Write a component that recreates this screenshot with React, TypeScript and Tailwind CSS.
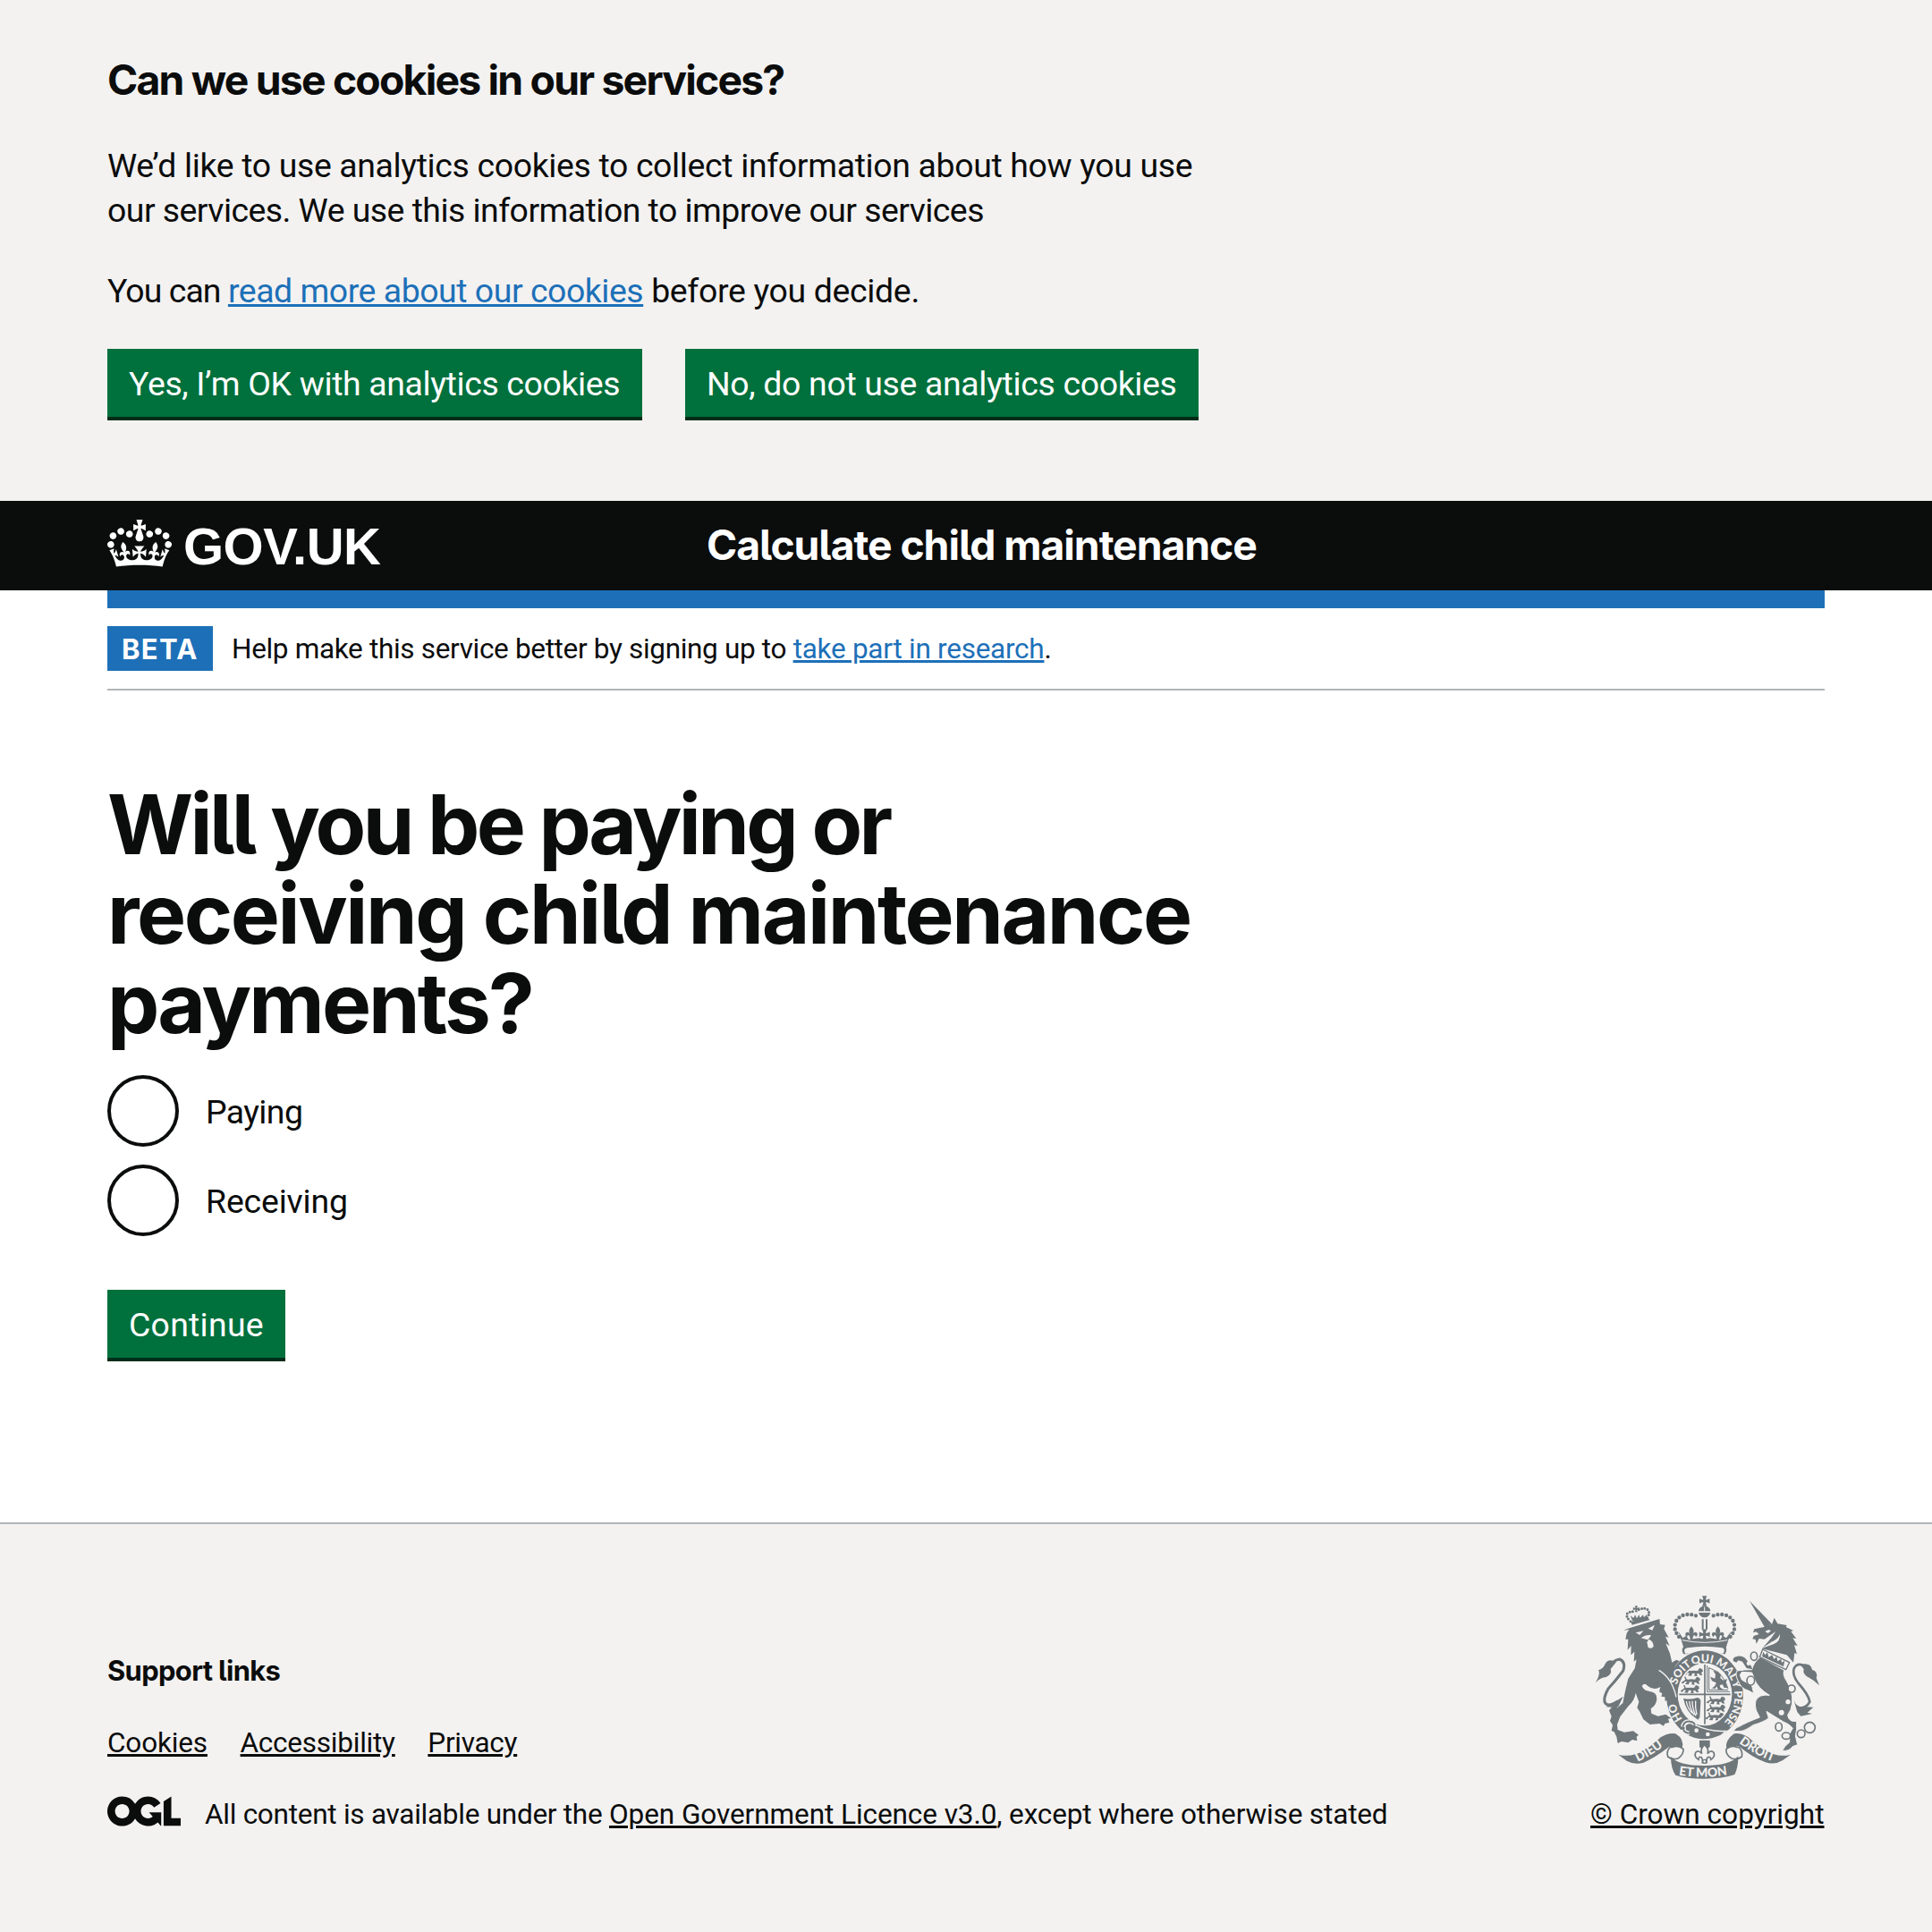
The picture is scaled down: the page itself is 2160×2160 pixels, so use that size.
import type { ReactNode } from 'react';

const bold = "font-['Inter','Liberation_Sans',sans-serif] font-bold [font-feature-settings:'cv05','ss03']";
const inkLink = 'underline decoration-[3px] underline-offset-[2px]';
const blueLink = 'text-[#1d70b8] underline decoration-[3px] underline-offset-[2px]';

function Button({ children, className }: { children: ReactNode; className: string }) {
  return (
    <button
      type="button"
      className={`h-20 shrink-0 whitespace-nowrap border-b-4 border-[#002d18] bg-[#00703c] px-6 pt-5 pb-[18px] text-left text-[37.4px] leading-[38px] text-white ${className}`}
    >
      {children}
    </button>
  );
}

function Radio({ label, className }: { label: string; className: string }) {
  return (
    <label className="flex gap-[30px]">
      <span className="size-20 rounded-full border-4 border-[#0b0c0c]" />
      <span className={`mt-4 text-[37.4px] leading-[50px] ${className}`}>{label}</span>
    </label>
  );
}

function Crown() {
  return (
    <svg viewBox="0 0 132 97" className="mt-[21px] h-[53px] w-[72px] fill-current">
      <path d="M25 30.2c3.5 1.5 7.7-.2 9.1-3.7 1.5-3.6-.2-7.8-3.9-9.2-3.6-1.4-7.6.3-9.1 3.9-1.4 3.5.3 7.5 3.9 9zM9 39.5c3.6 1.5 7.8-.2 9.2-3.7 1.5-3.6-.2-7.8-3.9-9.1-3.6-1.5-7.6.2-9.1 3.8-1.4 3.5.3 7.5 3.8 9zM4.4 57.2c3.5 1.5 7.7-.2 9.1-3.8 1.5-3.6-.2-7.7-3.9-9.1-3.5-1.5-7.6.3-9.1 3.8-1.4 3.5.3 7.6 3.9 9.1zm38.3-21.4c3.5 1.5 7.7-.2 9.1-3.8 1.5-3.6-.2-7.7-3.9-9.1-3.6-1.5-7.6.3-9.1 3.8-1.3 3.6.4 7.7 3.9 9.1zm64.4-5.6c-3.6 1.5-7.8-.2-9.1-3.7-1.5-3.6.2-7.8 3.8-9.2 3.6-1.4 7.7.3 9.2 3.9 1.3 3.5-.4 7.5-3.9 9zm15.9 9.3c-3.6 1.5-7.7-.2-9.1-3.7-1.5-3.6.2-7.8 3.7-9.1 3.6-1.5 7.7.2 9.2 3.8 1.5 3.5-.3 7.5-3.8 9zm4.7 17.7c-3.6 1.5-7.8-.2-9.2-3.8-1.5-3.6.2-7.7 3.9-9.1 3.6-1.5 7.7.3 9.2 3.8 1.3 3.5-.4 7.6-3.9 9.1zM89.3 35.8c-3.6 1.5-7.8-.2-9.2-3.8-1.4-3.6.2-7.7 3.9-9.1 3.6-1.5 7.7.3 9.2 3.8 1.4 3.6-.3 7.7-3.9 9.1zM69.7 17.7l8.9 4.7V9.3l-8.9 2.8c-.2-.3-.5-.6-.9-.9L72.4 0H59.6l3.5 11.2c-.3.3-.6.5-.9.9l-8.8-2.8v13.1l8.8-4.7c.3.3.6.7.9.9l-5 15.4v.1c-.2.8-.4 1.6-.4 2.4 0 4.1 3.1 7.5 7 8.1h.2c.3 0 .7.1 1 .1.4 0 .7 0 1-.1h.2c4-.6 7.1-4.1 7.1-8.1 0-.8-.1-1.7-.4-2.4V34l-5.1-15.4c.4-.2.7-.6 1-.9zM66 92.8c16.9 0 32.8 1.1 47.1 3.2 4-16.9 8.9-26.7 14-33.5l-9.6-3.4c1 4.9 1.1 7.2 0 10.2-1.5-1.4-3-4.3-4.2-8.7L108.6 76c2.8-2 5-3.2 7.5-3.3-4.4 9.4-10 11.9-13.6 11.2-4.3-.8-6.3-4.6-5.6-7.9 1-4.7 5.7-5.9 8-.5 4.3-8.7-3-11.4-7.6-8.8 7.1-7.2 7.9-13.5 2.1-21.1-8 6.1-8.1 12.3-4.5 20.8-4.7-5.4-12.1-2.5-9.5 6.2 3.4-5.2 7.9-2 7.2 3.1-.6 4.3-6.4 7.8-13.5 7.2-10.3-.9-10.9-8-11.2-13.8 2.5-.5 7.1 1.8 11 7.3L80.2 60c-4.1 4.4-8 5.3-12.3 5.4 1.4-4.4 8-11.6 8-11.6H55.5s6.4 7.2 7.9 11.6c-4.2-.1-8-1-12.3-5.4l1.4 16.4c3.9-5.5 8.5-7.7 10.9-7.3-.3 5.8-.9 12.8-11.1 13.8-7.2.6-12.9-2.9-13.5-7.2-.7-5 3.8-8.3 7.1-3.1 2.7-8.7-4.6-11.6-9.4-6.2 3.7-8.5 3.6-14.7-4.6-20.8-5.8 7.6-5 13.9 2.2 21.1-4.7-2.6-11.9.1-7.7 8.8 2.3-5.5 7.1-4.2 8.1.5.7 3.3-1.3 7.1-5.7 7.9-3.5.7-9-1.8-13.5-11.2 2.5.1 4.7 1.3 7.5 3.3l-4.7-15.4c-1.2 4.4-2.7 7.2-4.3 8.7-1.1-3-.9-5.3 0-10.2l-9.5 3.4c5 6.9 9.9 16.7 14 33.5 14.8-2.1 30.8-3.2 47.7-3.2z" />
    </svg>
  );
}

function OglLogo() {
  return (
    <svg viewBox="0 0 483.2 195.7" className="mt-[5px] h-[34px] w-[82px] fill-current">
      <path d="M421.5 142.8V.1l-50.7 32.3v161.1h112.4v-50.7zm-122.3-9.6A47.12 47.12 0 0 1 221 97.8c0-26 21.1-47.1 47.1-47.1 16.7 0 31.4 8.7 39.7 21.8l42.7-27.2A97.63 97.63 0 0 0 268.1 0c-36.5 0-68.3 20.1-85.1 49.7A98 98 0 0 0 97.8 0C43.9 0 0 43.9 0 97.8s43.9 97.8 97.8 97.8c36.5 0 68.3-20.1 85.1-49.7a97.76 97.76 0 0 0 149.6 25.4l19.4 22.2h3v-87.8h-80l24.3 27.5zM97.8 145c-26 0-47.1-21.1-47.1-47.1s21.1-47.1 47.1-47.1 47.1 21.1 47.1 47.1S123.8 145 97.8 145" />
    </svg>
  );
}

const INK = '#6f777b';
const PAPER = '#f3f2f1';

function CrossPattee({ x, y, s }: { x: number; y: number; s: number }) {
  return (
    <path
      transform={`translate(${x} ${y}) scale(${s})`}
      d="M-8-17H8Q4-10 4-4Q10-4 17-8V8Q10 4 4 4Q4 10 8 17H-8Q-4 10-4 4Q-10 4-17 8V-8Q-10-4-4-4Q-4-10-8-17z"
      fill={INK}
    />
  );
}

function Fleur({ x, y, s }: { x: number; y: number; s: number }) {
  return (
    <path
      transform={`translate(${x} ${y}) scale(${s})`}
      d="M0-24Q13-9 4 2Q10-8 18-3Q24 5 15 12Q14 4 8 6Q5 9 4 20H-4Q-5 9-8 6Q-14 4-15 12Q-24 5-18-3Q-10-8-4 2Q-13-9 0-24z"
      fill={INK}
    />
  );
}

/* A walking lion, used three to a quarter */
function Passant({ x, y }: { x: number; y: number }) {
  return (
    <path
      transform={`translate(${x} ${y})`}
      d="M0 2l8-7-4-8 4-2 4 9 4 1 12-1 12 1 6-9 9 3 3 8-6 4 4 9-9-1-3-5-7 1 2 8-11-1 3-8-9-1-3 9-12-1 6-8-7-1-5 7-7-2 6-7z"
      fill={INK}
    />
  );
}

function Crest() {
  return (
    <svg viewBox="72 40 750 618" className="mx-auto h-[206px] w-[250px]" fill="none">
      <defs>
        <path id="garter" d="M385 474A100 114 0 1 1 491 474" />
        <path id="dieu" d="M213 597Q268 572 322 528" />
        <path id="mon" d="M350 641Q437 656 524 639" />
        <path id="droit" d="M552 534Q604 574 672 598" />
        <clipPath id="shield">
          <ellipse cx="438" cy="371" rx="86" ry="100" />
        </clipPath>
      </defs>

      {/* royal crown */}
      <CrossPattee x={437} y={58} s={1} />
      <path d="M430 76h14q12 4 13 16h-40q1-12 13-16z" fill={INK} />
      <path d="M437 78v14" stroke={PAPER} strokeWidth="3" />
      <path d="M417 97h40q-4 12-12 15-8 2-16 0-8-3-12-15z" fill={INK} />
      <path d="M431 119v34M444 119v34" stroke={INK} strokeWidth="6" />
      <path
        d="M408 107Q386 99 364 106Q338 117 337 147Q340 168 357 184M467 107Q489 99 511 106Q537 117 538 147Q535 168 518 184"
        stroke={INK}
        strokeWidth="13"
        strokeLinecap="round"
        strokeDasharray="0 14.6"
      />
      <CrossPattee x={437} y={170} s={1.05} />
      <Fleur x={393} y={167} s={1} />
      <Fleur x={482} y={167} s={1} />
      <path d="M350 160l14 22 12-8 8 14 20-4 16-2 17 6 17-6 16 2 20 4 8-14 12 8 16-22-17 55q-77-21-142 0z" fill={INK} />
      <path d="M362 189Q437 205 514 189" stroke={PAPER} strokeWidth="3" />
      <path d="M366 236q-12-24 10-28 60-12 124 0 18 4 6 28z" fill={INK} />
      <path d="M372 234q-8-16 8-19 58-10 116 0 12 3 4 19z" fill={PAPER} />

      {/* garter */}
      <path d="M306 310Q318 276 344 258" stroke={INK} strokeWidth="6" />
      <ellipse cx="438" cy="373" rx="133" ry="153" fill={PAPER} />
      <ellipse cx="438" cy="373" rx="129" ry="149" fill={INK} />
      <ellipse cx="438" cy="371" rx="91" ry="105" fill={PAPER} />

      {/* quartered shield */}
      <g clipPath="url(#shield)">
        <path d="M438 270v210M348 371h182" stroke={INK} strokeWidth="5" />
        <Passant x={374} y={297} />
        <Passant x={365} y={326} />
        <Passant x={362} y={354} />
        <path d="M446 274v88h76M452 280v76h64M452 282q50 16 64 70" stroke={INK} strokeWidth="3" />
        <path
          d="M460 350q14-4 16-18l-14-6-6-14 16 6 2-14-8-12 16 2 10 10-2 12 10 8 14-6-6 14 6 18-12-2-4-10-10 2 2 8 12 8-20-2-4-10-6 8z"
          fill={INK}
        />
        <path d="M366 384q24 6 46-2 14 2 12 16l-3 50-6 8-8-6q-32-20-41-66z" fill={INK} />
        <path d="M376 394q4 24 20 40M386 394q2 24 16 46M396 393q0 26 12 50M407 393q-2 20 4 46" stroke={PAPER} strokeWidth="4" />
        <Passant x={449} y={392} />
        <Passant x={449} y={419} />
        <Passant x={445} y={446} />
      </g>

      {/* lion */}
      <path
        d="M187 148L286 118l2 18 17 2-4 14 16 28-11-3 14 32-13-9 14 34 7 30q12-12 26-5-16 14-18 28l-6 30 8 18 8 30-3 20-4 8 8 14-10 2-7-10-12 3-5-12-8 4-1-14-12-2 3-10-10-6 4-16q-22 14-42-3-12-14-20 0 6 16 26 18 26 4 24 26-2 20-20 32l2 16 22 9 26-6 18 13-10 2 4 12-15 4-4 8-14-8-32 3-22-17-13-27-8-12 6-20-11-30q-4 26-24 44l-28 36-10 26 2 18 22 8 30-4 18 13-7 6 2 14-16-4-14 10-22-4-13 6-4-22-8-16-9-4 4-19-9-14 5-15-8-20 10-12 18 3 18-16 8-40 10-42 22-34 6-30-9 7 2-33-12 11 1-31-12 14 2-36-9 0 4-20 8-12-20 2z"
        fill={INK}
      />
      <path d="M206 164l26-6-12 14zM248 150l22-12-8 18zM224 182q14-12 34-10-4 10-12 16zM250 186q16 6 16 24-6 10-18 4l-4-18z" fill={PAPER} />
      <path d="M284 290q44 26 58 90" stroke={PAPER} strokeWidth="4" />
      <path d="M104 292Q128 256 152 253Q174 262 164 292Q138 326 114 352Q92 392 108 404Q122 410 146 394" stroke={INK} strokeWidth="9" />
      <path d="M141 263Q114 248 103 270Q98 284 81 290Q90 300 72 331Q88 314 107 313Q128 304 122 286zM90 396q20 14 44 2l30-20-16 34-22 13 8-10-28-2 8-5z" fill={INK} />
      <path d="M190 128l56-14 8 7-60 17z" fill={INK} />
      <path d="M196 126l-8-20 11 9 5-11 6 12 7-12 4 10 10-10 3 9 10-11v20z" fill={INK} />
      <path d="M189 126q-16-14-12-25 14-12 29-6M245 114q10-14 3-26-14-10-32-1" stroke={INK} strokeWidth="9" strokeLinecap="round" strokeDasharray="0 10" />
      <CrossPattee x={208} y={84} s={0.62} />

      {/* garter motto */}
      <g fill={PAPER} className="font-['Lato','Liberation_Sans',sans-serif] text-[37px] font-black">
        <text><textPath href="#garter" startOffset="30">HO</textPath></text>
        <text><textPath href="#garter" startOffset="150">SOIT</textPath></text>
        <text><textPath href="#garter" startOffset="237">QUI</textPath></text>
        <text><textPath href="#garter" startOffset="315">MAL</textPath></text>
        <text><textPath href="#garter" startOffset="398">Y</textPath></text>
        <text><textPath href="#garter" startOffset="430">PENSE</textPath></text>
      </g>

      {/* buckle and strap */}
      <path d="M372 474q20-14 34 0 50 24 104 20l-20 16q-60 28-116-4z" fill={INK} stroke={PAPER} strokeWidth="4" />
      <path d="M364 480q4-20 24-18 16 2 16 12M366 488q4 14 20 12" stroke={PAPER} strokeWidth="14" />
      <path d="M364 480q4-20 24-18 16 2 16 12M366 488q4 14 20 12" stroke={INK} strokeWidth="6" />
      <circle cx="410" cy="492" r="7" fill={PAPER} />
      <circle cx="448" cy="505" r="7" fill={PAPER} />

      {/* pendant below the garter */}
      <path d="M420 525h35v22l-8 6h-20l-7-6z" fill={INK} />
      <path
        d="M437 540Q454 556 447 570Q458 556 468 566Q474 580 458 590Q458 578 448 582Q442 588 444 600H430Q432 588 427 582Q417 578 417 590Q401 580 407 566Q417 556 428 570Q421 556 437 540z"
        fill={PAPER}
        stroke={INK}
        strokeWidth="5"
      />
      <circle cx="437" cy="596" r="6" fill={PAPER} stroke={INK} strokeWidth="4" />

      {/* unicorn */}
      <path d="M588 57l74 77-22 14z" fill={INK} />
      <path
        d="M640 144l24-10 7-20 11 20 31 5-3 6 25 12-8 3 18 24-12-2 16 26-11-2 9 30-8-4-4 32-22-25-83-21 32-38 14-20-38 26-18-2-9 17-3-14-10-2 4-10 18-6-10-8-10 3 4-12z"
        fill={INK}
      />
      <path d="M640 160l12-6 8 4-10 8zM690 168q2 24-20 34l-40 14 30-20q24-10 30-28z" fill={PAPER} />
      <path
        d="M624 246L704 290Q698 305 712 326Q734 360 731 400Q728 425 716 440Q716 452 728 460L746 462Q748 490 742 510L749 540L732 546Q722 562 698 560Q704 545 722 532L722 504L733 484Q722 470 700 462L645 428L652 450Q640 462 600 474Q575 492 560 494L534 495Q540 482 555 478Q575 466 622 448L610 424Q600 385 626 376Q640 372 655 374Q615 350 604 318L596 298L562 296L556 306L562 322L596 342L602 368L584 358Q560 352 552 330Q538 306 546 292Q570 288 596 288Q602 262 624 246z"
        fill={INK}
        stroke={PAPER}
        strokeWidth="3"
      />
      <path d="M534 260q-6-14 14-17 20-2 30 12l14 18 6 14-20-4-14-22-14-4-6 7z" fill={INK} />
      <path d="M632 220l90 44-12 24-88-42z" fill={PAPER} stroke={INK} strokeWidth="4" />
      <path d="M630 244l4-16 6 11 8-9 4 16 12-7 6 14 9-9 3 16 12-8 2 13 10-8-4 21z" fill={INK} />
      <g fill={PAPER} stroke={INK} strokeWidth="5">
        <ellipse cx="603" cy="243" rx="11" ry="14" />
        <ellipse cx="592" cy="325" rx="13" ry="15" />
        <circle cx="729" cy="352" r="12" />
        <ellipse cx="686" cy="480" rx="11" ry="14" />
        <ellipse cx="711" cy="510" rx="14" ry="11" />
        <ellipse cx="761" cy="503" rx="13" ry="13" />
        <circle cx="790" cy="482" r="18" />
      </g>
      <circle cx="717" cy="396" r="8" fill={PAPER} />
      <circle cx="695" cy="432" r="9" fill={PAPER} />
      <circle cx="585" cy="267" r="7" fill={PAPER} />
      <path d="M786 287Q752 256 737 284Q730 306 752 334Q786 372 790 396Q780 416 752 418" stroke={INK} strokeWidth="8" />
      <path d="M758 271Q792 262 798 288Q820 296 812 316L822 341Q806 324 788 315Q764 304 770 286zM736 388q8 28 34 24l32 2-20 18 16 4-38 8-12-14z" fill={INK} />

      {/* motto ribbons */}
      <path d="M148 573q30 8 58-2 44-18 84-56 26-16 50-12 30 18 22 48l-20-4-24 0Q270 584 232 600q-30 8-56-6z" fill={INK} />
      <path d="M726 573q-30 8-58-2-44-18-84-56-26-16-48-12-30 22-26 48l18-6h24q48 40 90 54 30 10 56-6z" fill={INK} />
      <path d="M322 548q-14 12-8 32 14 12 34 6 20-14 18-32-18-14-36-6z" fill={PAPER} stroke={INK} strokeWidth="5" />
      <path d="M552 548q14 12 10 32-14 12-34 6-22-14-18-32 18-14 34-6z" fill={PAPER} stroke={INK} strokeWidth="5" />
      <path d="M324 580q24 30 112 30t114-32q0 40-12 62-40 14-102 14t-96-12q-16-22-16-62z" fill={INK} />
      <g fill={PAPER} className="font-['Lato','Liberation_Sans',sans-serif] text-[42px] font-black">
        <text><textPath href="#dieu">DIEU</textPath></text>
        <text><textPath href="#mon">ET MON</textPath></text>
        <text><textPath href="#droit">DROIT</textPath></text>
      </g>
    </svg>
  );
}

export default function App() {
  return (
    <div className="flex h-[2160px] w-[2160px] flex-col overflow-hidden bg-white font-['Roboto','Liberation_Sans',sans-serif] text-[#0b0c0c]">
      <section className="h-[560px] bg-[#f3f2f1] px-[120px] pt-[59px]">
        <h2 className={`${bold} mb-[41px] text-[46.3px] leading-[60px] tracking-[-1.78px]`}>Can we use cookies in our services?</h2>
        <p className="mb-10 whitespace-nowrap text-[37.4px] leading-[50px]">
          <span className="block tracking-[-0.34px]">We’d like to use analytics cookies to collect information about how you use</span>
          <span className="block tracking-[-0.53px]">our services. We use this information to improve our services</span>
        </p>
        <p className="mb-10 whitespace-pre text-[37.4px] leading-[50px]">
          <span className="tracking-[-0.93px]">You can </span>
          <a className={`${blueLink} tracking-[-0.45px]`}>read more about our cookies</a>
          <span className="tracking-[-0.32px]"> before you decide.</span>
        </p>
        <div className="flex gap-12">
          <Button className="w-[598px] tracking-[-0.35px]">Yes, I’m OK with analytics cookies</Button>
          <Button className="w-[574px] tracking-[-0.32px]">No, do not use analytics cookies</Button>
        </div>
      </section>

      <header className="h-[100px] bg-[#0b0c0c] px-[120px] text-white">
        <div className="flex">
          <div className="flex w-[670px] gap-[13px]">
            <Crown />
            <span className="mt-[22px] font-['Liberation_Sans',sans-serif] text-[58px] leading-[58px] font-bold tracking-[-0.5px]">GOV.UK</span>
          </div>
          <span className={`${bold} mt-[19px] text-[46.3px] leading-[60px] tracking-[-1.04px]`}>Calculate child maintenance</span>
        </div>
      </header>

      <div className="mx-[120px] h-5 bg-[#1d70b8]" />
      <div className="mx-[120px] flex border-b-2 border-[#b1b4b6] py-5">
        <strong className={`${bold} mr-[21px] h-[50px] w-[118px] bg-[#1d70b8] pt-px pl-4 text-[31px] leading-[50px] tracking-[1.3px] text-white`}>BETA</strong>
        <p className="h-[50px] pt-px whitespace-pre text-[31.5px] leading-[50px]">
          <span className="tracking-[-0.33px]">Help make this service better by signing up to </span>
          <a className={`${blueLink} tracking-[-0.26px]`}>take part in research</a>.
        </p>
      </div>

      <main className="h-[930px] px-[120px] pt-[99px]">
        <h1 className={`${bold} mb-[31px] whitespace-nowrap text-[92.6px] leading-[100px]`}>
          <span className="block tracking-[-3.64px]">Will you be paying or</span>
          <span className="block tracking-[-2.42px]">receiving child maintenance</span>
          <span className="block tracking-[-2.95px]">payments?</span>
        </h1>
        <div className="mb-[60px] flex flex-col gap-5">
          <Radio label="Paying" className="tracking-[-0.6px]" />
          <Radio label="Receiving" className="tracking-[-0.15px]" />
        </div>
        <Button className="w-[199px] tracking-[0.27px]">Continue</Button>
      </main>

      <footer className="flex flex-1 justify-between border-t-2 border-[#b1b4b6] bg-[#f3f2f1] px-[120px] pt-20">
        <div className="pt-[59px] text-[31.5px] leading-[50px] whitespace-nowrap">
          <h2 className={`${bold} mb-[31px] text-[30.9px] tracking-[-0.64px]`}>Support links</h2>
          <div className="mb-[29px] flex">
            <a className={`${inkLink} mr-[36.6px] tracking-[-0.15px]`}>Cookies</a>
            <a className={`${inkLink} mr-[36.6px] tracking-[-0.24px]`}>Accessibility</a>
            <a className={`${inkLink} tracking-[-0.27px]`}>Privacy</a>
          </div>
          <div className="flex gap-[27px]">
            <OglLogo />
            <p className="pt-px whitespace-pre">
              <span className="tracking-[-0.26px]">All content is available under the </span>
              <a className={`${inkLink} tracking-[-0.07px]`}>Open Government Licence v3.0</a>
              <span className="tracking-[-0.14px]">, except where otherwise stated</span>
            </p>
          </div>
        </div>
        <div className="flex w-[262px] flex-col gap-3.5 text-[31.5px] leading-[50px]">
          <Crest />
          <a className={`${inkLink} whitespace-nowrap tracking-[0.04px]`}>© Crown copyright</a>
        </div>
      </footer>
    </div>
  );
}
